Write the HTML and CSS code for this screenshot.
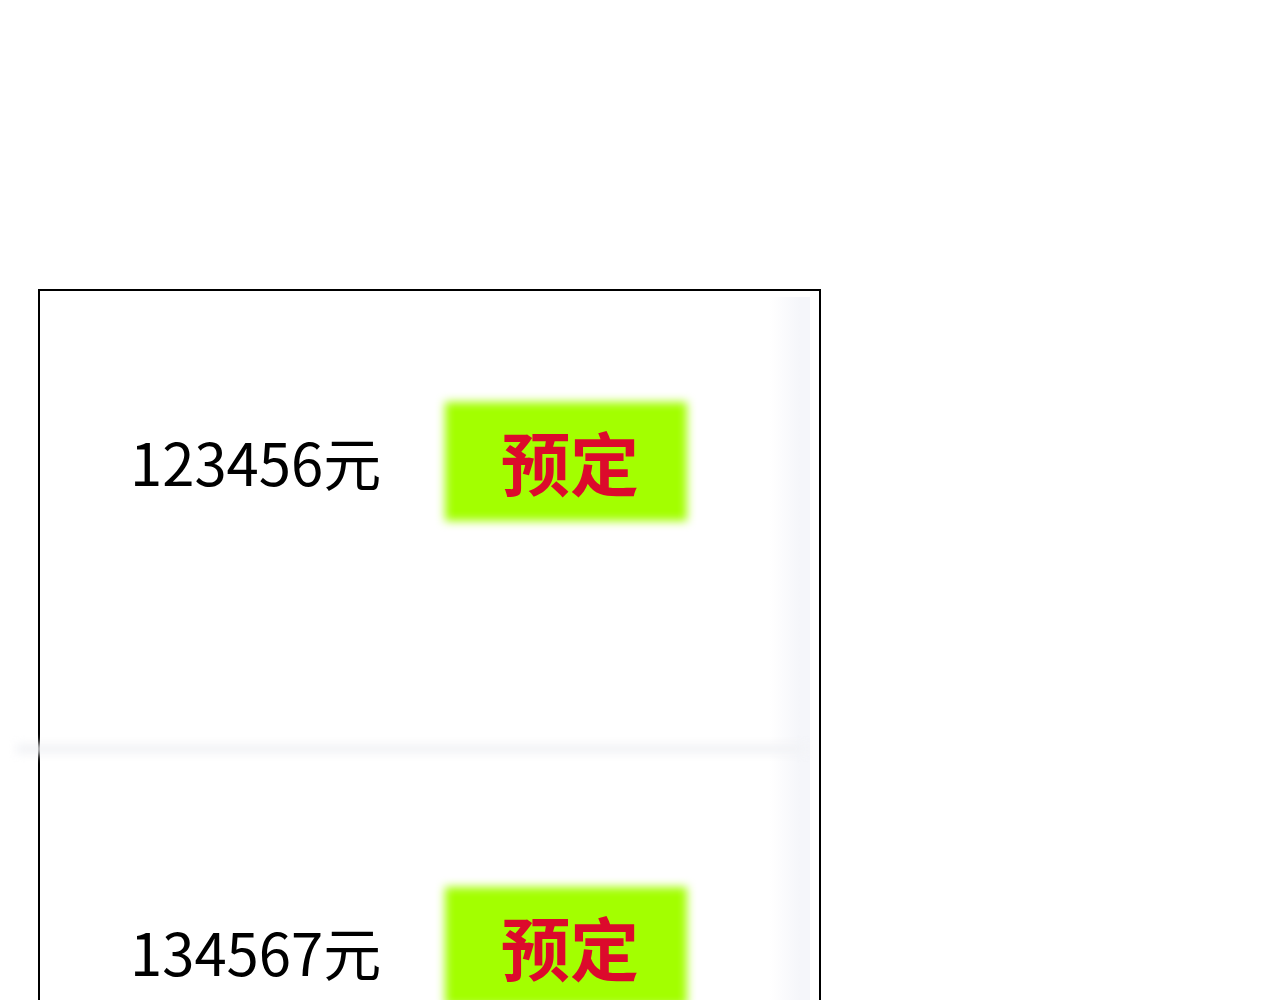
FILE: index.html
```html
<html>
<head>
<meta charset="utf-8">
<title>预定</title>
<link rel="stylesheet" href="styles.css">
</head>
<body>
<div class="list">
	<div class="item first">
		<span class="price">123456元</span>
		<span class="book">预定</span>
	</div>
	<div class="sep"></div>
	<div class="item second">
		<span class="price">134567元</span>
		<span class="book">预定</span>
	</div>
</div>
</body>
</html>
```
FILE: styles.css
```css
body {margin: 8px; background: #fff; font-family: "Noto Sans CJK SC", sans-serif;}

/* bordered list, grey rail down the right side */
.list {
	width: 779px;
	margin-top: 281px;
	margin-left: 30px;
	border: 2px solid #000;
	border-bottom: none;
	padding-top: 6px;
	background: linear-gradient(to right, #fff 730px, #f5f6fa 760px, #f5f6fa 770px, #fff 770px);
	background-clip: content-box;
	background-origin: content-box;
}

/* one row: price on the left, button after it */
.item {
	display: flex;
	align-items: flex-start;
	padding-left: 90px;
}

.item.first {padding-top: 105px; height: 342px;}
.item.first .price {margin-top: 17px;}

.item.second {padding-top: 133px; height: 400px;}
.item.second .price {margin-top: 22px;}

.price {font-size: 58px; line-height: 84px; color: #000; width: 315px;}

.book {
	position: relative;
	isolation: isolate;
	box-sizing: border-box;
	width: 242px;
	height: 119px;
	padding-left: 8px;
	line-height: 118px;
	text-align: center;
	color: #dc0a2c;
	font-size: 69px;
	font-weight: bold;
}

/* fuzzy green pad behind the label */
.book::before {
	content: "";
	position: absolute;
	top: 0; right: 0; bottom: 0; left: 0;
	z-index: -1;
	background: #a3ff00;
	filter: blur(5px);
}

/* soft grey band between rows */
.sep {
	height: 10px;
	margin-left: -24px;
	width: 790px;
	background: #f2f3f6;
	filter: blur(5px);
}
```
